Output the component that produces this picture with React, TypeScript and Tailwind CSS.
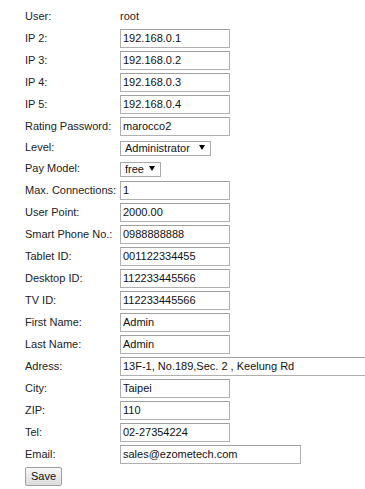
import { useState } from 'react';

interface Field {
    label: string;
    value: string;
    kind: 'text' | 'plain' | 'select';
    width?: string;
    options?: string[];
}

const fields: Field[] = [
    { label: 'User:', value: 'root', kind: 'plain' },
    { label: 'IP 2:', value: '192.168.0.1', kind: 'text' },
    { label: 'IP 3:', value: '192.168.0.2', kind: 'text' },
    { label: 'IP 4:', value: '192.168.0.3', kind: 'text' },
    { label: 'IP 5:', value: '192.168.0.4', kind: 'text' },
    { label: 'Rating Password:', value: 'marocco2', kind: 'text' },
    { label: 'Level:', value: 'Administrator', kind: 'select', width: 'w-[91px]', options: ['Administrator', 'User'] },
    { label: 'Pay Model:', value: 'free', kind: 'select', width: 'w-[41px]', options: ['free', 'paid'] },
    { label: 'Max. Connections:', value: '1', kind: 'text' },
    { label: 'User Point:', value: '2000.00', kind: 'text' },
    { label: 'Smart Phone No.:', value: '0988888888', kind: 'text' },
    { label: 'Tablet ID:', value: '001122334455', kind: 'text' },
    { label: 'Desktop ID:', value: '112233445566', kind: 'text' },
    { label: 'TV ID:', value: '112233445566', kind: 'text' },
    { label: 'First Name:', value: 'Admin', kind: 'text' },
    { label: 'Last Name:', value: 'Admin', kind: 'text' },
    { label: 'Adress:', value: '13F-1, No.189,Sec. 2 , Keelung Rd', kind: 'text', width: 'w-[262px]' },
    { label: 'City:', value: 'Taipei', kind: 'text' },
    { label: 'ZIP:', value: '110', kind: 'text' },
    { label: 'Tel:', value: '02-27354224', kind: 'text' },
    { label: 'Email:', value: 'sales@ezometech.com', kind: 'text', width: 'w-[181px]' },
];

function FieldRow({ field }: { field: Field }) {
    const [value, setValue] = useState(field.value);
    const tall = field.kind === 'select' ? 'h-[21px]' : 'h-[22px]';

    return (
        <div className={`flex items-center ${tall}`}>
            <div className="w-[120px] shrink-0 pl-[25px] whitespace-nowrap leading-none">{field.label}</div>
            {field.kind === 'plain' && <div className="leading-none">{value}</div>}
            {field.kind === 'text' && (
                <input
                    type="text"
                    value={value}
                    onChange={(e) => setValue(e.target.value)}
                    className={`${field.width ?? 'w-[110px]'} shrink-0 h-[19px] border border-[#b0b0b0] border-t-[#a0a0a0] bg-white px-[2px] text-[11px] text-[#111] outline-none font-['Liberation_Sans',Arial,sans-serif]`}
                />
            )}
            {field.kind === 'select' && (
                <div className={`relative ${field.width} h-[15px] shrink-0`}>
                    <select
                        value={value}
                        onChange={(e) => setValue(e.target.value)}
                        className="w-full h-full appearance-none border border-[#a9a9a9] bg-white pl-[4px] text-[11px] leading-none text-[#111] outline-none font-['Liberation_Sans',Arial,sans-serif]"
                    >
                        {field.options!.map((o) => (
                            <option key={o}>{o}</option>
                        ))}
                    </select>
                    <svg className="pointer-events-none absolute right-[6px] top-[5px]" width="6" height="5" viewBox="0 0 6 5">
                        <path d="M0 0 H6 L3 5 Z" fill="#000" />
                    </svg>
                </div>
            )}
        </div>
    );
}

export default function App() {
    return (
        <div className="w-[365px] h-[489px] overflow-hidden bg-white pt-[5px] text-[11px] text-[#222] font-['Liberation_Sans',Arial,sans-serif]">
            {fields.map((f) => (
                <FieldRow key={f.label} field={f} />
            ))}
            <div className="flex items-center h-[22px] pl-[25px]">
                <button className="h-[19px] w-[37px] rounded-[2px] border border-[#a0a0a0] bg-gradient-to-b from-[#f8f8f8] to-[#dcdcdc] text-[11px] leading-none text-[#111]">
                    Save
                </button>
            </div>
        </div>
    );
}
